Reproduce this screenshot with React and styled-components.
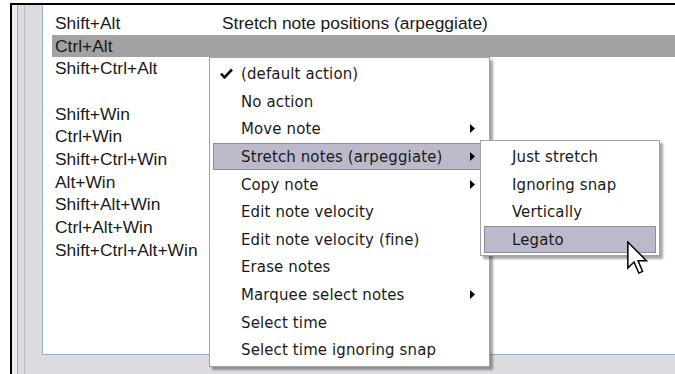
import React from 'react'
import styled, { createGlobalStyle } from 'styled-components'

const GlobalStyle = createGlobalStyle`
  html, body {
    margin: 0;
    padding: 0;
    background: #fff;
  }
  body {
    width: 675px;
    height: 374px;
    overflow: hidden;
  }
`

const rows = [
    { key: 'Shift+Alt', action: 'Stretch note positions (arpeggiate)' },
    { key: 'Ctrl+Alt', action: '', selected: true },
    { key: 'Shift+Ctrl+Alt', action: '' },
    { key: '', action: '' },
    { key: 'Shift+Win', action: '' },
    { key: 'Ctrl+Win', action: '' },
    { key: 'Shift+Ctrl+Win', action: '' },
    { key: 'Alt+Win', action: '' },
    { key: 'Shift+Alt+Win', action: '' },
    { key: 'Ctrl+Alt+Win', action: '' },
    { key: 'Shift+Ctrl+Alt+Win', action: '' },
]

const menuItems = [
    { label: '(default action)', checked: true },
    { label: 'No action' },
    { label: 'Move note', sub: true },
    { label: 'Stretch notes (arpeggiate)', sub: true, active: true },
    { label: 'Copy note', sub: true },
    { label: 'Edit note velocity' },
    { label: 'Edit note velocity (fine)' },
    { label: 'Erase notes' },
    { label: 'Marquee select notes', sub: true },
    { label: 'Select time' },
    { label: 'Select time ignoring snap' },
]

const subItems = [
    { label: 'Just stretch' },
    { label: 'Ignoring snap' },
    { label: 'Vertically' },
    { label: 'Legato', active: true },
]

function CheckMark() {
    return (
        <svg width="13" height="11" viewBox="0 0 13 11">
            <path d="M1 5.5 L4.5 9.5 L12 1.5" fill="none" stroke="#111" strokeWidth="2.6" strokeLinejoin="miter" />
        </svg>
    )
}

function SubArrow() {
    return (
        <svg width="5" height="9" viewBox="0 0 5 9">
            <path d="M0 0 L5 4.5 L0 9 Z" fill="#000" />
        </svg>
    )
}

function Pointer() {
    return (
        <svg width="21" height="34" viewBox="0 0 12.5 20">
            <path d="M0.5 0.5 L0.5 16 L4.2 12.4 L7 19 L9.3 18 L6.6 11.6 L11.6 11.6 Z" fill="#fff" stroke="#000" strokeWidth="0.9" strokeLinejoin="miter" />
        </svg>
    )
}

function App() {
    return (
        <Page>
            <GlobalStyle />
            <Frame>
                <Edge />
                <Gutter />
                <Body>
                    <ListBox>
                        {rows.map((row, i) => (
                            <Row key={i} selected={row.selected}>
                                <KeyCell>{row.key}</KeyCell>
                                <ActionCell>{row.action}</ActionCell>
                            </Row>
                        ))}
                    </ListBox>
                </Body>
            </Frame>

            <Menu style={{ left: 209, top: 57, width: 281 }}>
                {menuItems.map((item) => (
                    <MenuItem key={item.label} active={item.active}>
                        <CheckSlot>{item.checked && <CheckMark />}</CheckSlot>
                        <Label>{item.label}</Label>
                        {item.sub && <ArrowSlot><SubArrow /></ArrowSlot>}
                    </MenuItem>
                ))}
            </Menu>

            <Menu style={{ left: 480, top: 140, width: 180 }}>
                {subItems.map((item) => (
                    <MenuItem key={item.label} active={item.active}>
                        <CheckSlot />
                        <Label>{item.label}</Label>
                    </MenuItem>
                ))}
            </Menu>

            <Cursor>
                <Pointer />
            </Cursor>
        </Page>
    )
}

const Page = styled.div`
    position: relative;
    width: 675px;
    height: 374px;
    padding: 3px 0 0 10px;
    box-sizing: border-box;
    background: #fff;
    color: #1a1a1a;
    font-family: "DejaVu Sans Condensed", "DejaVu Sans", sans-serif;
`

const Frame = styled.div`
    display: flex;
    height: 100%;
    border-top: 2px solid #000;
    border-left: 2px solid #000;
    background: #dcdce0;
`

const Edge = styled.div`
    width: 5px;
    background: #eeeef1;
`

const Gutter = styled.div`
    width: 24px;
    border-left: 1px solid #94afcc;
    background: linear-gradient(to right, transparent 6px, #bdbdc2 6px, #bdbdc2 7px, transparent 7px), #dcdce0;
`

const Body = styled.div`
    flex: 1;
    display: flex;
    flex-direction: column;
`

const ListBox = styled.div`
    height: 350px;
    box-sizing: border-box;
    padding-top: 7px;
    background: #fff;
    border-left: 1px solid #94afcc;
    border-bottom: 1px solid #94afcc;
    font-family: "Liberation Sans", Arial, sans-serif;
    font-size: 17.4px;
`

const Row = styled.div`
    display: flex;
    align-items: center;
    height: 22.7px;
    margin-left: 9px;
    padding-left: 3px;
    background: ${(p) => (p.selected ? '#a2a2a2' : 'transparent')};
    white-space: nowrap;
`

const KeyCell = styled.div`
    width: 167px;
    flex-shrink: 0;
`

const ActionCell = styled.div``

const Menu = styled.div`
    position: absolute;
    box-sizing: border-box;
    padding: 2px 3px;
    background: #fff;
    border: 1px solid #a3a3a3;
    box-shadow: 3px 3px 2px rgba(0, 0, 0, 0.35);
    font-size: 16.6px;
    letter-spacing: 0.15px;
`

const MenuItem = styled.div`
    display: flex;
    align-items: center;
    height: 27.6px;
    box-sizing: border-box;
    padding: 0 10px 0 6px;
    border: 1px solid ${(p) => (p.active ? '#8e8c9e' : 'transparent')};
    background: ${(p) => (p.active ? '#bcb9cb' : 'transparent')};
    white-space: nowrap;
`

const CheckSlot = styled.div`
    width: 21px;
    flex-shrink: 0;
    display: flex;
    align-items: center;
`

const Label = styled.span`
    flex: 1;
`

const ArrowSlot = styled.span`
    display: flex;
    align-items: center;
`

const Cursor = styled.div`
    position: absolute;
    left: 627px;
    top: 241px;
    line-height: 0;
`

export default App
